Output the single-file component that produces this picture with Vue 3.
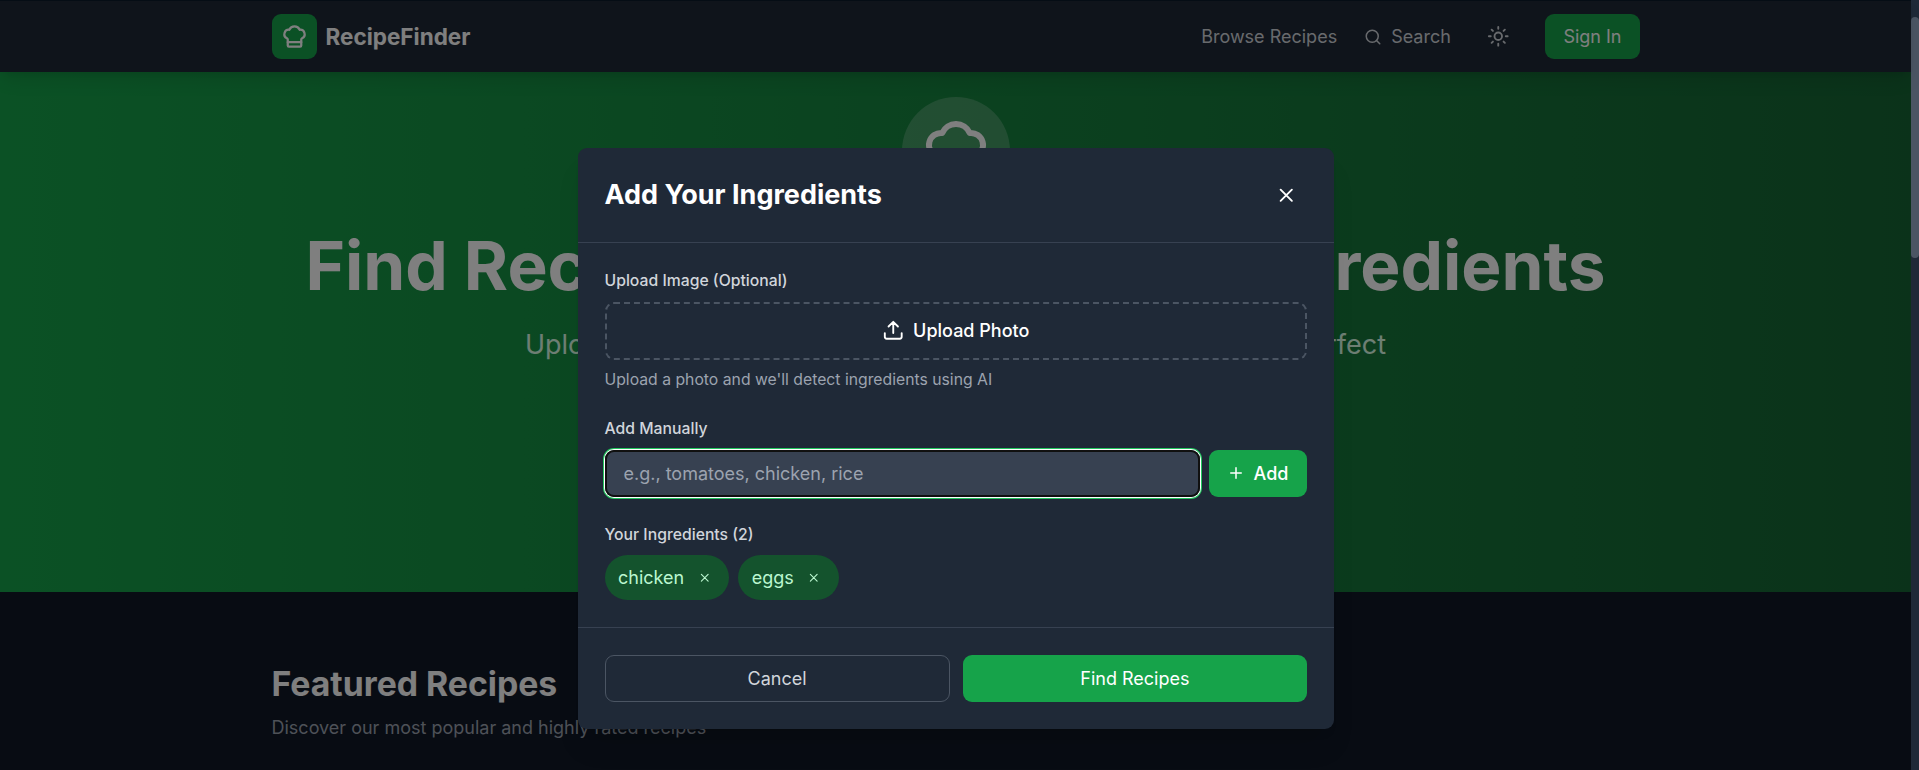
<script setup>
import { ref } from 'vue'

const ingredients = ref(['chicken', 'eggs'])
const draft = ref('')

function add() {
  const name = draft.value.trim()
  if (name) ingredients.value.push(name)
  draft.value = ''
}
function remove(i) {
  ingredients.value.splice(i, 1)
}
</script>

<template>
  <div class="window">
    <div class="page">
      <header class="nav">
        <div class="container nav-row">
          <div class="brand">
            <span class="logo">
              <svg class="i24" viewBox="0 0 24 24"><path d="M17 21a1 1 0 0 0 1-1v-5.35c0-.457.316-.844.727-1.041a4 4 0 0 0-2.134-7.589 5 5 0 0 0-9.186 0 4 4 0 0 0-2.134 7.588c.411.198.727.585.727 1.041V20a1 1 0 0 0 1 1Z" /><path d="M6 17h12" /></svg>
            </span>
            <span class="brand-name">RecipeFinder</span>
          </div>
          <nav class="links">
            <a>Browse Recipes</a>
            <a class="search">
              <svg class="i16" viewBox="0 0 24 24"><circle cx="11" cy="11" r="8" /><path d="m21 21-4.3-4.3" /></svg>
              <span>Search</span>
            </a>
            <a class="theme">
              <svg class="i20" viewBox="0 0 24 24"><circle cx="12" cy="12" r="4" /><path d="M12 2v2M12 20v2M4.93 4.93l1.41 1.41M17.66 17.66l1.41 1.41M2 12h2M20 12h2M6.34 17.66l-1.41 1.41M19.07 4.93l-1.41 1.41" /></svg>
            </a>
            <a class="signin">Sign In</a>
          </nav>
        </div>
      </header>
      <section class="hero">
        <div class="hero-badge">
          <svg class="i64" viewBox="0 0 24 24"><path d="M17 21a1 1 0 0 0 1-1v-5.35c0-.457.316-.844.727-1.041a4 4 0 0 0-2.134-7.589 5 5 0 0 0-9.186 0 4 4 0 0 0-2.134 7.588c.411.198.727.585.727 1.041V20a1 1 0 0 0 1 1Z" /><path d="M6 17h12" /></svg>
        </div>
        <h1>Find Recipes Based on Your Ingredients</h1>
        <p>Upload a photo or add ingredients manually to discover the perfect</p>
      </section>
      <section class="container featured">
        <h2>Featured Recipes</h2>
        <p>Discover our most popular and highly rated recipes</p>
      </section>
    </div>
    <div class="scrollbar"><div class="thumb"></div></div>

    <div class="overlay">
      <div class="modal">
        <div class="modal-head">
          <h3>Add Your Ingredients</h3>
          <button class="close">
            <svg class="i20" viewBox="0 0 24 24"><path d="M18 6 6 18M6 6l12 12" /></svg>
          </button>
        </div>
        <div class="modal-body">
          <div>
            <label>Upload Image (Optional)</label>
            <button class="upload">
              <svg class="i20" viewBox="0 0 24 24"><path d="M21 15v4a2 2 0 0 1-2 2H5a2 2 0 0 1-2-2v-4M17 8l-5-5-5 5M12 3v12" /></svg>
              <span>Upload Photo</span>
            </button>
            <p class="hint">Upload a photo and we'll detect ingredients using AI</p>
          </div>
          <div>
            <label>Add Manually</label>
            <div class="entry">
              <input v-model="draft" placeholder="e.g., tomatoes, chicken, rice" @keyup.enter="add" />
              <button class="add" @click="add">
                <svg class="i16" viewBox="0 0 24 24"><path d="M5 12h14M12 5v14" /></svg>
                <span>Add</span>
              </button>
            </div>
          </div>
          <div>
            <label>Your Ingredients ({{ ingredients.length }})</label>
            <div class="chips">
              <span v-for="(item, i) in ingredients" :key="item" class="chip">
                {{ item }}
                <button @click="remove(i)">
                  <svg class="i12" viewBox="0 0 24 24"><path d="M18 6 6 18M6 6l12 12" /></svg>
                </button>
              </span>
            </div>
          </div>
        </div>
        <div class="modal-foot">
          <button class="cancel">Cancel</button>
          <button class="find">Find Recipes</button>
        </div>
      </div>
    </div>
  </div>
</template>

<style>
body {
  background: #111827;
  overflow: hidden;
}
</style>

<style scoped>
* {
  box-sizing: border-box;
  margin: 0;
}
.window {
  position: relative;
  display: flex;
  height: 770px;
  overflow: hidden;
  font: 400 18px/27px Inter, 'Liberation Sans', sans-serif;
  color: #fff;
}
button,
input {
  font: inherit;
  color: inherit;
  border: 0;
  background: none;
  padding: 0;
}
svg {
  display: block;
  flex: none;
  fill: none;
  stroke: currentColor;
  stroke-width: 2;
  stroke-linecap: round;
  stroke-linejoin: round;
}
.i12 { width: 13.5px; height: 13.5px; }
.i16 { width: 18px; height: 18px; }
.i20 { width: 22.5px; height: 22.5px; }
.i24 { width: 27px; height: 27px; }
.i64 { width: 72px; height: 72px; }

.page {
  flex: 1;
  background: #111827;
}
.container {
  width: 1440px;
  margin: 0 auto;
  padding: 0 36px;
}
.nav {
  position: relative;
  height: 72px;
  padding-top: 1px;
  background: #1f2937;
  border-top: 1px solid #0a1a2b;
  box-shadow: 0 11px 17px -3px rgba(0, 0, 0, 0.1), 0 4px 7px -4px rgba(0, 0, 0, 0.1);
}
.nav-row {
  display: flex;
  justify-content: space-between;
  align-items: center;
  height: 69px;
}
.brand {
  display: flex;
  align-items: center;
  gap: 9px;
}
.logo {
  display: grid;
  place-items: center;
  width: 45px;
  height: 45px;
  border-radius: 9px;
  background: #16a34a;
}
.brand-name {
  font-size: 22.5px;
  font-weight: 700;
}
.links {
  display: flex;
  align-items: center;
  color: #d1d5db;
}
.search {
  display: flex;
  align-items: center;
  gap: 9px;
  margin-left: 27px;
}
.theme {
  margin: 0 36px;
}
.signin {
  padding: 9px 18px;
  border-radius: 9px;
  background: #16a34a;
  color: #fff;
}
.hero {
  height: 520px;
  padding-top: 25px;
  display: flex;
  flex-direction: column;
  align-items: center;
  background: linear-gradient(to right, #16a34a, #166534);
  white-space: nowrap;
}
.hero-badge {
  display: grid;
  place-items: center;
  width: 108px;
  height: 108px;
  border-radius: 50%;
  background: rgba(255, 255, 255, 0.2);
}
.hero h1 {
  margin-top: 27px;
  font-size: 67.5px;
  line-height: 67.5px;
  font-weight: 700;
}
.hero p {
  margin-top: 27px;
  font-size: 27px;
  line-height: 36px;
  word-spacing: 0.8px;
  color: #dcfce7;
}
.featured {
  padding-top: 72px;
}
.featured h2 {
  font-size: 33.75px;
  line-height: 40.5px;
  font-weight: 700;
}
.featured p {
  margin-top: 9px;
  color: #9ca3af;
}
.scrollbar {
  width: 8px;
  padding-top: 17px;
  background: #1f2937;
}
.thumb {
  height: 241px;
  border-radius: 4px;
  background: #4b5563;
}

.overlay {
  position: absolute;
  inset: 0 8px 0 0;
  padding-top: 148px;
  display: flex;
  align-items: flex-start;
  justify-content: center;
  background: rgba(0, 0, 0, 0.5);
}
.modal {
  width: 756px;
  border-radius: 9px;
  background: #1f2937;
  box-shadow: 0 22px 28px -6px rgba(0, 0, 0, 0.1), 0 9px 11px -7px rgba(0, 0, 0, 0.1);
}
.modal-head {
  display: flex;
  align-items: center;
  justify-content: space-between;
  height: 95px;
  padding: 0 27px;
  border-bottom: 1px solid #374151;
}
.modal-head h3 {
  font-size: 27px;
  line-height: 36px;
  font-weight: 700;
}
.close {
  padding: 9px;
}
.modal-body {
  display: flex;
  flex-direction: column;
  gap: 27px;
  padding: 27px;
}
label {
  display: block;
  margin-bottom: 9px;
  font-size: 15.75px;
  line-height: 22.5px;
  font-weight: 500;
  color: #d1d5db;
}
.upload {
  display: flex;
  align-items: center;
  justify-content: center;
  gap: 9px;
  width: 100%;
  height: 58px;
  border: 2px dashed #4b5563;
  border-radius: 9px;
  font-weight: 500;
}
.hint {
  margin-top: 9px;
  font-size: 15.75px;
  line-height: 22.5px;
  color: #9ca3af;
}
.entry {
  display: flex;
  gap: 9px;
}
input {
  flex: 1;
  height: 47px;
  padding: 0 19px;
  border-radius: 9px;
  background: #374151;
  outline: none;
}
input::placeholder {
  color: #9ca3af;
  opacity: 1;
}
.add {
  display: flex;
  align-items: center;
  justify-content: center;
  gap: 9px;
  width: 98px;
  border-radius: 9px;
  background: #16a34a;
  font-weight: 500;
}
.entry input {
  box-shadow: inset 0 0 0 2px #101010, 0 0 0 1px #fff, 0 0 0 2px #22c55e;
}
.chips {
  display: flex;
  gap: 9px;
}
.chip {
  display: flex;
  align-items: center;
  gap: 9px;
  height: 45px;
  padding: 0 13.5px;
  border-radius: 23px;
  background: #14532d;
  color: #bbf7d0;
}
.chip button {
  padding: 4.5px;
}
.modal-foot {
  display: flex;
  gap: 13.5px;
  padding: 27px;
  border-top: 1px solid #374151;
}
.modal-foot button {
  flex: 1;
  height: 47px;
  border-radius: 9px;
}
.cancel {
  border: 1px solid #4b5563;
  color: #d1d5db;
}
.find {
  background: #16a34a;
}
</style>
